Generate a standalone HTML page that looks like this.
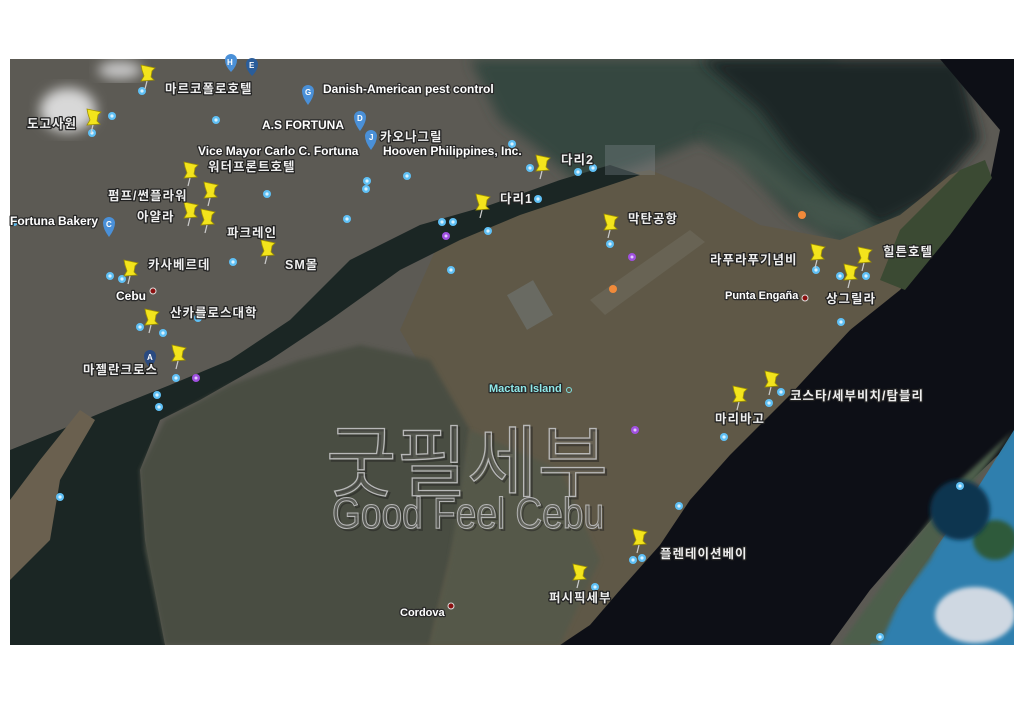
<!DOCTYPE html>
<html><head><meta charset="utf-8"><style>
html,body{margin:0;padding:0;background:#fff;width:1024px;height:723px;overflow:hidden}
svg{position:absolute;left:0;top:0}
.l{font-family:"Liberation Sans","Noto Sans CJK KR",sans-serif;font-size:12px;font-weight:bold;fill:#fff;stroke:#2a2a2a;stroke-width:2.6px;paint-order:stroke;stroke-linejoin:round}
.k{font-family:"Liberation Sans","Noto Sans CJK KR",sans-serif;font-size:12.5px;font-weight:bold;fill:#eee;stroke:#222;stroke-width:2.6px;paint-order:stroke;letter-spacing:1px}
</style></head><body>
<svg width="1024" height="723" viewBox="0 0 1024 723">
<defs>
<clipPath id="c"><rect x="10" y="59" width="1004" height="586"/></clipPath>
<filter id="b" x="-20%" y="-20%" width="140%" height="140%"><feGaussianBlur stdDeviation="6"/></filter>
<filter id="b2"><feGaussianBlur stdDeviation="2"/></filter>
<g id="p"><path d="M-5,-1 L9,2 L6,5 L5,11 L8,14 L-5,15 L-2,10 L-4,4 Z" fill="#f3e41c" stroke="#a09200" stroke-width="0.8"/><line x1="1" y1="15" x2="-1" y2="23" stroke="#ccc" stroke-width="1.2"/></g>
<g id="d"><circle r="4" fill="#5fc0f5"/><circle r="1.6" fill="#d8f2ff"/></g>
<g id="v"><circle r="4" fill="#a050e0"/><circle r="1.5" fill="#e0c8ff"/></g>
</defs>
<g clip-path="url(#c)">
<rect x="10" y="59" width="1004" height="586" fill="#5c5a54"/>
<!-- north water -->
<path d="M470,59 L830,59 L900,120 L930,170 L900,230 L840,245 L790,215 L740,160 L700,140 L640,165 L580,185 L540,150 L500,120 Z" fill="#34463f" filter="url(#b)"/>
<path d="M700,59 L960,59 L980,140 L930,200 L880,225 L840,200 L790,150 L760,110 Z" fill="#1a2628" filter="url(#b)"/>
<path d="M700,130 L760,180 L820,230 L880,240 L860,210 L800,190 L750,150 Z" fill="#4a5a50" filter="url(#b)" opacity="0.7"/>
<!-- ocean -->
<path d="M940,59 L1014,59 L1014,440 L940,510 L870,590 L830,645 L560,645 L620,590 L680,510 L740,440 L800,380 L860,320 L920,260 L990,180 L1000,130 Z" fill="#0d0f16"/>
<path d="M1014,430 L1014,645 L870,645 L920,570 L970,500 Z" fill="#2f7fae"/>
<path d="M1014,430 L960,500 L930,560 L900,600 L880,645 L840,645 L900,560 L960,480 Z" fill="#4e5e4c" filter="url(#b2)"/>
<ellipse cx="975" cy="615" rx="40" ry="28" fill="#cfd8e2" filter="url(#b2)"/>
<ellipse cx="995" cy="540" rx="22" ry="20" fill="#2d5a3a" filter="url(#b2)"/>
<ellipse cx="960" cy="510" rx="30" ry="30" fill="#0d3550" filter="url(#b2)"/>
<!-- Mactan island -->
<path d="M440,240 L520,205 L590,180 L650,170 L700,190 L760,225 L840,240 L900,215 L950,175 L985,160 L990,180 L950,230 L900,290 L850,330 L790,395 L730,455 L690,500 L660,545 L620,590 L590,625 L560,645 L420,645 L430,560 L470,470 L440,400 L400,330 Z" fill="#5f5847"/>
<path d="M900,230 L960,170 L985,160 L992,178 L950,235 L905,290 L880,280 Z" fill="#3b4a33"/>
<!-- channel -->
<path d="M10,450 L60,430 L120,405 L170,385 L230,360 L290,320 L350,260 L420,225 L490,205 L560,180 L610,165 L640,175 L580,195 L520,215 L460,240 L400,270 L330,320 L270,360 L200,400 L160,420 L140,470 L145,540 L165,645 L10,645 Z" fill="#1b2624"/>
<!-- reclaimed land left -->
<path d="M10,500 L40,460 L80,410 L95,420 L60,480 L50,540 L20,570 L10,580 Z" fill="#6a604f"/>
<!-- shallows south -->
<path d="M165,420 L230,385 L300,360 L360,345 L430,360 L470,430 L460,520 L440,600 L430,645 L165,645 L145,550 L140,470 Z" fill="#494d43" filter="url(#b2)"/>
<path d="M470,430 L560,470 L600,560 L560,645 L430,645 L450,560 Z" fill="#555849" filter="url(#b2)"/>
<!-- cloud -->
<ellipse cx="68" cy="110" rx="28" ry="22" fill="#d8d8d8" filter="url(#b)"/>
<ellipse cx="120" cy="70" rx="22" ry="9" fill="#c8c8c8" filter="url(#b)"/>
<!-- airport -->
<path d="M590,300 L690,230 L705,242 L605,315 Z" fill="#6e6a5e" opacity="0.6"/>
<rect x="515" y="285" width="30" height="40" fill="#7d8b94" opacity="0.35" transform="rotate(-30 530 305)"/>
<rect x="605" y="145" width="50" height="30" fill="#8a949a" opacity="0.3"/>
</g>
<!-- watermark -->
<text x="328" y="492" font-family="'Noto Sans CJK KR',sans-serif" font-size="78" fill="none" stroke="#222" stroke-width="2" opacity="0.5" textLength="282" lengthAdjust="spacingAndGlyphs">굿필세부</text>
<text x="326" y="490" font-family="'Noto Sans CJK KR',sans-serif" font-size="78" fill="rgba(160,160,160,0.15)" stroke="#b8b8b8" stroke-width="1.3" textLength="282" lengthAdjust="spacingAndGlyphs">굿필세부</text>
<text x="334" y="530" font-family="'Liberation Sans',sans-serif" font-size="44" fill="none" stroke="#222" stroke-width="1.5" opacity="0.5" textLength="272" lengthAdjust="spacingAndGlyphs">Good Feel Cebu</text>
<text x="332" y="528" font-family="'Liberation Sans',sans-serif" font-size="44" fill="rgba(140,140,140,0.35)" stroke="#b5b5b5" stroke-width="1.1" textLength="272" lengthAdjust="spacingAndGlyphs">Good Feel Cebu</text>
<!-- markers -->
<g>
<path d="M225,60 a6,6 0 1 1 12,0 q0,6 -6,12 q-6,-6 -6,-12z" fill="#4a90d8"/><text x="227" y="65" font-size="8" font-weight="bold" fill="#fff" font-family="Liberation Sans">H</text>
<path d="M246,64 a6,6 0 1 1 12,0 q0,6 -6,12 q-6,-6 -6,-12z" fill="#2a5d9a"/><text x="249" y="68" font-size="8" font-weight="bold" fill="#fff" font-family="Liberation Sans">E</text>
<path d="M302,91 a6,6 0 1 1 12,0 q0,6 -6,14 q-6,-8 -6,-14z" fill="#4a90d8"/><text x="305" y="95" font-size="8" font-weight="bold" fill="#fff" font-family="Liberation Sans">G</text>
<path d="M354,117 a6,6 0 1 1 12,0 q0,6 -6,14 q-6,-8 -6,-14z" fill="#4a90d8"/><text x="357" y="121" font-size="8" font-weight="bold" fill="#fff" font-family="Liberation Sans">D</text>
<path d="M365,136 a6,6 0 1 1 12,0 q0,6 -6,14 q-6,-8 -6,-14z" fill="#4a90d8"/><text x="369" y="140" font-size="8" font-weight="bold" fill="#fff" font-family="Liberation Sans">J</text>
<path d="M103,223 a6,6 0 1 1 12,0 q0,6 -6,14 q-6,-8 -6,-14z" fill="#4a90d8"/><text x="106" y="227" font-size="8" font-weight="bold" fill="#fff" font-family="Liberation Sans">C</text>
<path d="M144,356 a6,6 0 1 1 12,0 q0,6 -6,12 q-6,-6 -6,-12z" fill="#2a4a80"/><text x="147" y="360" font-size="8" font-weight="bold" fill="#fff" font-family="Liberation Sans">A</text>
</g>
<g>
<use href="#d" x="142" y="91"/><use href="#d" x="112" y="116"/><use href="#d" x="92" y="133"/><use href="#d" x="216" y="120"/><use href="#d" x="267" y="194"/><use href="#d" x="366" y="189"/><use href="#d" x="367" y="181"/><use href="#d" x="407" y="176"/><use href="#d" x="347" y="219"/><use href="#d" x="233" y="262"/><use href="#d" x="110" y="276"/><use href="#d" x="122" y="279"/><use href="#d" x="140" y="327"/><use href="#d" x="163" y="333"/><use href="#d" x="198" y="318"/><use href="#d" x="157" y="395"/><use href="#d" x="159" y="407"/><use href="#d" x="60" y="497"/><use href="#d" x="442" y="222"/><use href="#d" x="453" y="222"/><use href="#d" x="488" y="231"/><use href="#d" x="451" y="270"/><use href="#d" x="512" y="144"/><use href="#d" x="530" y="168"/><use href="#d" x="578" y="172"/><use href="#d" x="593" y="168"/><use href="#d" x="538" y="199"/><use href="#d" x="610" y="244"/><use href="#d" x="816" y="270"/><use href="#d" x="840" y="276"/><use href="#d" x="866" y="276"/><use href="#d" x="841" y="322"/><use href="#d" x="769" y="403"/><use href="#d" x="781" y="392"/><use href="#d" x="724" y="437"/><use href="#d" x="679" y="506"/><use href="#d" x="633" y="560"/><use href="#d" x="642" y="558"/><use href="#d" x="595" y="587"/><use href="#d" x="960" y="486"/><use href="#d" x="880" y="637"/><use href="#d" x="14" y="222"/><use href="#d" x="176" y="378"/>
<use href="#v" x="196" y="378"/><use href="#v" x="446" y="236"/><use href="#v" x="632" y="257"/><use href="#v" x="635" y="430"/>
<circle cx="802" cy="215" r="4" fill="#f08a3a"/><circle cx="613" cy="289" r="4" fill="#f08a3a"/>
<circle cx="153" cy="291" r="3" fill="#8a1010" stroke="#ddd"/><circle cx="805" cy="298" r="3" fill="#8a1010" stroke="#ddd"/><circle cx="451" cy="606" r="3" fill="#8a1010" stroke="#ddd"/>
<circle cx="569" cy="390" r="2.5" fill="none" stroke="#7fe0e0"/>
</g>
<g>
<use href="#p" x="146" y="66"/><use href="#p" x="92" y="110"/><use href="#p" x="189" y="163"/><use href="#p" x="209" y="183"/><use href="#p" x="189" y="203"/><use href="#p" x="206" y="210"/><use href="#p" x="266" y="241"/><use href="#p" x="129" y="261"/><use href="#p" x="150" y="310"/><use href="#p" x="177" y="346"/><use href="#p" x="541" y="156"/><use href="#p" x="481" y="195"/><use href="#p" x="609" y="215"/><use href="#p" x="816" y="245"/><use href="#p" x="863" y="248"/><use href="#p" x="849" y="265"/><use href="#p" x="738" y="387"/><use href="#p" x="770" y="372"/><use href="#p" x="638" y="530"/><use href="#p" x="578" y="565"/>
</g>
<g class="l">
<text class="k" x="165" y="93">마르코폴로호텔</text>
<text x="323" y="93">Danish-American pest control</text>
<text class="k" x="27" y="128">도고사원</text>
<text x="262" y="129">A.S FORTUNA</text>
<text class="k" x="380" y="141">카오나그릴</text>
<text x="198" y="155">Vice Mayor Carlo C. Fortuna</text>
<text x="383" y="155">Hooven Philippines, Inc.</text>
<text class="k" x="208" y="171">워터프론트호텔</text>
<text class="k" x="108" y="200">펌프/썬플라워</text>
<text class="k" x="137" y="221">아얄라</text>
<text x="10" y="225">Fortuna Bakery</text>
<text class="k" x="227" y="237">파크레인</text>
<text class="k" x="148" y="269">카사베르데</text>
<text class="k" x="285" y="269">SM몰</text>
<text x="116" y="300">Cebu</text>
<text class="k" x="170" y="317">산카를로스대학</text>
<text class="k" x="83" y="374">마젤란크로스</text>
<text class="k" x="561" y="164">다리2</text>
<text class="k" x="500" y="203">다리1</text>
<text class="k" x="628" y="223">막탄공항</text>
<text class="k" x="710" y="264">라푸라푸기념비</text>
<text class="k" x="883" y="256">힐튼호텔</text>
<text x="725" y="299" font-size="11">Punta Engaña</text>
<text class="k" x="826" y="303">상그릴라</text>
<text x="489" y="392" font-size="11" style="fill:#8fe8e8">Mactan Island</text>
<text class="k" x="790" y="400">코스타/세부비치/탐블리</text>
<text class="k" x="715" y="423">마리바고</text>
<text class="k" x="660" y="558">플렌테이션베이</text>
<text class="k" x="549" y="602">퍼시픽세부</text>
<text x="400" y="616" font-size="11">Cordova</text>
</g>
</svg>
</body></html>
